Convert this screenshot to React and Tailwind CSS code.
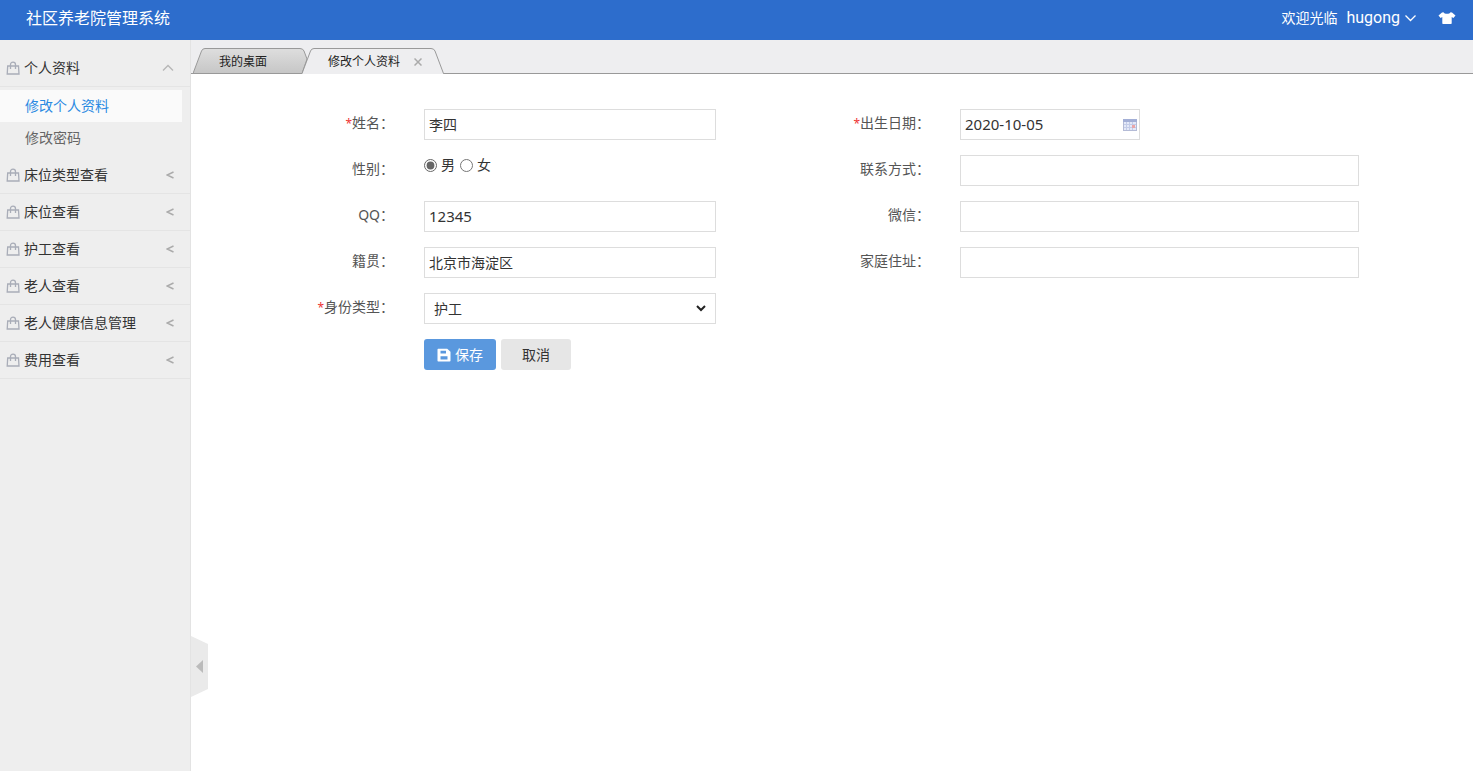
import { useState } from "react";

const menuItems = [
  { name: "个人资料", children: ["修改个人资料", "修改密码"] },
  { name: "床位类型查看" },
  { name: "床位查看" },
  { name: "护工查看" },
  { name: "老人查看" },
  { name: "老人健康信息管理" },
  { name: "费用查看" },
];

const inputClass =
  "block h-[31px] w-full border border-[#ddd] bg-white px-1 pb-0.5 text-sm text-[#333] outline-none focus:border-[#3bb4f2]";
const numberInputClass =
  "block h-[31px] w-full border border-[#ddd] bg-white px-1 pb-0.5 text-[15px] text-[#333] outline-none focus:border-[#3bb4f2]";

function BagIcon() {
  return (
    <svg width="14" height="14" viewBox="0 0 14 14" fill="none" stroke="#a9adb8">
      <path d="M1.700 5h10.800l.5 8H1.200z" strokeWidth="1.3" />
      <path d="M4.500 8V3.800C4.500 2.100 5.400 1.200 7 1.200S9.500 2.100 9.500 3.800V8" strokeWidth="1.300" />
    </svg>
  );
}

function CalendarIcon() {
  return (
    <svg width="14" height="12" viewBox="0 0 14 12">
      <rect x=".5" y=".5" width="13" height="11" fill="#e4e9f8" stroke="#b4bbd6" />
      <rect x="0" y="0" width="14" height="3" fill="#a3afd6" />
      <path d="M3.500 3v8M6.500 3v8M9.500 3v8M1 5.500h12M1 8.500h12" stroke="#c3cce8" />
      <rect x="9" y="6" width="3" height="3" fill="#e9a6a8" />
    </svg>
  );
}

function SaveIcon() {
  return (
    <svg width="14" height="14" viewBox="0 0 14 14" fill="#fff">
      <path
        fillRule="evenodd"
        d="M1.200.8h9L13.500 3.800v8.900a.8.8 0 0 1-.8.8H1.300a.8.8 0 0 1-.8-.8V1.500a.7.700 0 0 1 .7-.7zM3.500 2.800v2.700h5.500V2.800zM3.500 8.200v3.300h7V8.200z"
      />
    </svg>
  );
}

function Header() {
  return (
    <header className="flex h-10 items-center justify-between bg-[#2d6dcc] pb-1 pl-[26px] pr-[17px] text-white">
      <h1 className="text-base">社区养老院管理系统</h1>
      <div className="flex items-center text-sm">
        <span>欢迎光临</span>
        <button type="button" className="ml-[9px] flex items-center gap-1 font-[Roboto] text-base">
          hugong
          <svg width="13" height="12" viewBox="0 0 13 12" fill="none" stroke="#fff" strokeWidth="1.3">
            <path d="M1.500 3.500l5 5 5-5" />
          </svg>
        </button>
        <button type="button" aria-label="换肤" className="ml-[21px]">
          <svg width="18" height="14" viewBox="0 0 18 14" fill="#fff">
            <path d="M5.500 1.200C6.500 3.200 11.500 3.200 12.500 1.200L14 1.600 17.500 4.500 15.400 7 13.700 6V12.300a.7.700 0 0 1-.7.700H5a.7.700 0 0 1-.7-.7V6L2.600 7 .5 4.500 4 1.600z" />
          </svg>
        </button>
      </div>
    </header>
  );
}

function Sidebar() {
  const [openMenu, setOpenMenu] = useState("个人资料");

  return (
    <aside className="w-[191px] shrink-0 border-r border-[#e3e3e3] bg-[#eee] pt-2.5">
      {menuItems.map(({ name, children }) => {
        const isOpen = children && openMenu === name;
        return (
          <div key={name}>
            <button
              type="button"
              className="flex h-[37px] w-full cursor-pointer items-center border-b border-[#e4e4e4] pl-1.5 pr-4 text-sm text-[#333]"
              onClick={() => setOpenMenu(isOpen ? "" : name)}
            >
              <BagIcon />
              <span className="ml-1 grow text-left">{name}</span>
              {isOpen ? (
                <svg width="12" height="8" viewBox="0 0 12 8" fill="none" stroke="#b6b6b6" strokeWidth="1.300">
                  <path d="M1 6.500l5-5 5 5" />
                </svg>
              ) : (
                <svg width="8" height="8" viewBox="0 0 8 8" fill="none" stroke="#aaa" strokeWidth="1.500">
                  <path d="M7.500 1L1 4l6.500 3" />
                </svg>
              )}
            </button>
            {isOpen && (
              <ul className="py-[3px] pr-2">
                {children.map((child, i) => (
                  <li key={child}>
                    <a
                      href="#"
                      className={
                        i === 0
                          ? "block bg-[#fafafa] pl-[25px] text-sm leading-8 text-[#2a8ae2]"
                          : "block pl-[25px] text-sm leading-8 text-[#666]"
                      }
                    >
                      {child}
                    </a>
                  </li>
                ))}
              </ul>
            )}
          </div>
        );
      })}
    </aside>
  );
}

function TabBar() {
  return (
    <nav className="flex h-[34px] items-end border-b border-[#999] bg-[#eeeef0] pl-0.5 text-xs text-[#222]">
      <button type="button" className="relative -mb-px h-[26px] w-[114px] pl-[26px] pt-0.5 text-left">
        <svg className="absolute left-0 top-0" width="114" height="26" viewBox="0 0 114 26">
          <defs>
            <linearGradient id="tabFill" x1="0" y1="0" x2="0" y2="1">
              <stop offset="0" stopColor="#dedede" />
              <stop offset="1" stopColor="#c6c6c6" />
            </linearGradient>
          </defs>
          <path
            d="M0 25.500L8.500 3Q9.500.5 12 .5H107Q110 .5 111 3L114 11 109 25.500z"
            fill="url(#tabFill)"
            stroke="#999"
          />
        </svg>
        <span className="relative">我的桌面</span>
      </button>
      <div className="relative -mb-px -ml-[5px] flex h-[26px] w-[142px] items-center pl-[26px] pt-0.5">
        <svg className="absolute left-0 top-0" width="142" height="26" viewBox="0 0 142 26">
          <path d="M0 26L8.500 3Q9.500.5 12 .5H129Q132 .5 133 3L141.500 26z" fill="#eeeef0" />
          <path
            d="M0 25.500L8.500 3Q9.500.5 12 .5H129Q132 .5 133 3L141.500 25.500"
            fill="none"
            stroke="#999"
          />
        </svg>
        <span className="relative">修改个人资料</span>
        <button type="button" aria-label="关闭" className="relative ml-3.5">
          <svg width="8" height="8" viewBox="0 0 8 8" stroke="#aaa" strokeWidth="1.500">
            <path d="M.5.5l7 7M7.500.5l-7 7" />
          </svg>
        </button>
      </div>
    </nav>
  );
}

function Label({ htmlFor, required, children }) {
  return (
    <label htmlFor={htmlFor} className="pr-[30px] text-right text-sm leading-7 text-[#555]">
      {required && <span className="text-xs text-[#e33]">*</span>}
      {children}：
    </label>
  );
}

function ProfileForm() {
  return (
    <form
      className="grid auto-rows-[31px] grid-cols-[233fr_292fr_244fr_399fr] gap-y-[15px] pr-[114px] pt-[35px] text-sm text-[#333]"
      onSubmit={(e) => e.preventDefault()}
    >
      <Label htmlFor="name" required>姓名</Label>
      <input id="name" className={inputClass} defaultValue="李四" />
      <Label htmlFor="birthday" required>出生日期</Label>
      <div className="flex h-[31px] w-[180px] items-center border border-[#ddd] pl-1 pr-0.5">
        <input
          id="birthday"
          className="h-full w-0 grow pb-0.5 text-[15px] text-[#333] outline-none"
          defaultValue="2020-10-05"
        />
        <CalendarIcon />
      </div>

      {/* 性别 */}
      <span id="sex" className="pr-[30px] text-right leading-7 text-[#555]">性别：</span>
      <div role="radiogroup" aria-labelledby="sex" className="flex h-5 items-center">
        <input id="male" type="radio" name="sex" className="size-[13px] accent-[#666]" defaultChecked />
        <label htmlFor="male" className="ml-1 mr-[5px]">男</label>
        <input id="female" type="radio" name="sex" className="size-[13px] accent-[#666]" />
        <label htmlFor="female" className="ml-1">女</label>
      </div>
      <Label htmlFor="phone">联系方式</Label>
      <input id="phone" className={inputClass} />

      <Label htmlFor="qq">QQ</Label>
      <input id="qq" className={numberInputClass} defaultValue="12345" />
      <Label htmlFor="wechat">微信</Label>
      <input id="wechat" className={inputClass} />

      <Label htmlFor="origin">籍贯</Label>
      <input id="origin" className={inputClass} defaultValue="北京市海淀区" />
      <Label htmlFor="address">家庭住址</Label>
      <input id="address" className={inputClass} />

      <Label htmlFor="role" required>身份类型</Label>
      <div className="relative">
        <select
          id="role"
          className="h-[31px] w-full appearance-none border border-[#ddd] bg-white pl-[9px] pr-6 text-sm text-[#333]"
        >
          <option>护工</option>
        </select>
        <svg
          className="pointer-events-none absolute right-2.5 top-3"
          width="10"
          height="7"
          viewBox="0 0 10 7"
          fill="none"
          stroke="#222"
          strokeWidth="2"
        >
          <path d="M1 1l4 4 4-4" />
        </svg>
      </div>

      {/* 操作按钮 */}
      <div className="col-start-2 row-start-6 flex gap-[5px]">
        <button
          type="submit"
          className="flex h-[31px] w-[72px] cursor-pointer items-center justify-center gap-1 rounded-[3px] bg-[#5a98de] text-white"
        >
          <SaveIcon />
          保存
        </button>
        <button type="button" className="h-[31px] w-[70px] cursor-pointer rounded-[3px] bg-[#e6e6e6]">
          取消
        </button>
      </div>
    </form>
  );
}

export default function App() {
  return (
    <div
      lang="zh-CN"
      className="flex min-h-screen flex-col bg-white font-['Noto_Sans','Noto_Sans_CJK_SC',sans-serif]"
    >
      <Header />
      <div className="flex grow">
        <Sidebar />
        <main className="relative min-w-0 grow">
          <TabBar />
          <ProfileForm />
          <button type="button" aria-label="收起菜单" className="absolute bottom-[74px] left-0">
            <svg width="17" height="61" viewBox="0 0 17 61">
              <path d="M0 0L17 8V53L0 61z" fill="#eaeaea" />
              <path d="M12 24V37L5 30.500z" fill="#bbb" />
            </svg>
          </button>
        </main>
      </div>
    </div>
  );
}
